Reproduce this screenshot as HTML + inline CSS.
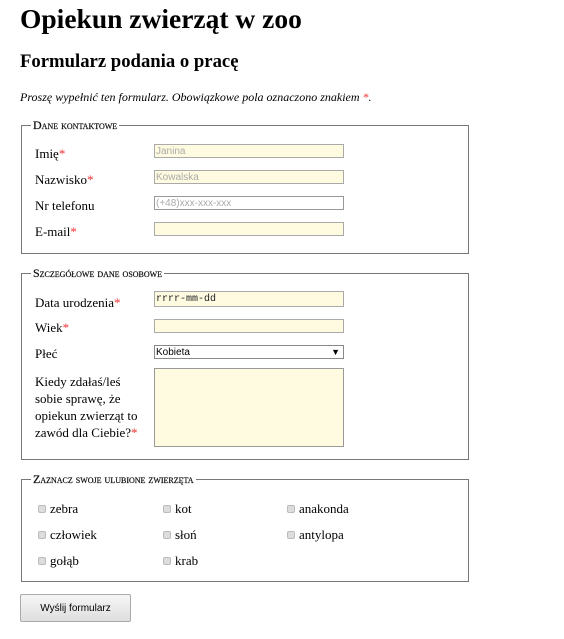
<!DOCTYPE html>
<html><head><meta charset="utf-8"><style>
body{margin:0;width:564px;height:639px;background:#fff;font-family:"Liberation Serif",serif;color:#000;position:relative;overflow:hidden}
.a{position:absolute;white-space:nowrap}
.fs{position:absolute;left:21px;width:446px;border:1px solid #777;}
.lg{position:absolute;top:-8px;left:9px;background:#fff;padding:0 2px;font-variant:small-caps;font-size:12px;line-height:14px;color:#111;-webkit-text-stroke:0.2px #000}
.lb{position:absolute;left:13px;font-size:13px}
.r{color:#e33}
.in{position:absolute;left:132px;width:187px;height:12px;border:1px solid #aaa;background:#fefbe0;font-family:"Liberation Sans",sans-serif;font-size:10px;color:#aaa;line-height:14px;padding-left:1px}
.cb{position:absolute;width:6px;height:6px;border:1px solid #bbb;border-radius:2px;background:#ddd}
.ct{position:absolute;font-size:13px}
</style></head><body>
<div class="a" style="left:20px;top:3px;font-size:27.5px;font-weight:bold">Opiekun zwierząt w zoo</div>
<div class="a" style="left:20px;top:51px;font-size:18.7px;font-weight:bold">Formularz podania o pracę</div>
<div class="a" style="left:20px;top:90px;font-size:12px;font-style:italic">Proszę wypełnić ten formularz. Obowiązkowe pola oznaczono znakiem <span class="r">*</span>.</div>

<div class="fs" style="top:125px;height:127px">
<div class="lg">Dane kontaktowe</div>
<div class="lb" style="top:20px">Imię<span class="r">*</span></div>
<div class="lb" style="top:46px">Nazwisko<span class="r">*</span></div>
<div class="lb" style="top:72px">Nr telefonu</div>
<div class="lb" style="top:98px">E-mail<span class="r">*</span></div>
<div class="in" style="top:18px">Janina</div>
<div class="in" style="top:44px">Kowalska</div>
<div class="in" style="top:70px;background:#fff;border-color:#999">(+48)xxx-xxx-xxx</div>
<div class="in" style="top:96px"></div>
</div>

<div class="fs" style="top:273px;height:185px">
<div class="lg">Szczegółowe dane osobowe</div>
<div class="lb" style="top:21px">Data urodzenia<span class="r">*</span></div>
<div class="lb" style="top:46px">Wiek<span class="r">*</span></div>
<div class="lb" style="top:72px">Płeć</div>
<div class="lb" style="top:99px;white-space:normal;width:115px;line-height:17px">Kiedy zdałaś/leś sobie sprawę, że opiekun zwierząt to zawód dla Ciebie?<span class="r">*</span></div>
<div class="in" style="top:17px;height:14px;font-family:'Liberation Mono',monospace;color:#222;line-height:16px">rrrr-mm-dd</div>
<div class="in" style="top:45px"></div>
<div class="in" style="top:71px;background:#fff;color:#000;border-color:#888;line-height:13px">Kobieta<span style="position:absolute;right:3px;top:0;font-size:9px">▼</span></div>
<div class="in" style="top:94px;height:77px;border-color:#999"></div>
</div>

<div class="fs" style="top:479px;height:101px">
<div class="lg">Zaznacz swoje ulubione zwierzęta</div>
<div class="cb" style="left:16px;top:25px"></div><div class="ct" style="left:28px;top:21px">zebra</div>
<div class="cb" style="left:141px;top:25px"></div><div class="ct" style="left:153px;top:21px">kot</div>
<div class="cb" style="left:265px;top:25px"></div><div class="ct" style="left:277px;top:21px">anakonda</div>
<div class="cb" style="left:16px;top:51px"></div><div class="ct" style="left:28px;top:47px">człowiek</div>
<div class="cb" style="left:141px;top:51px"></div><div class="ct" style="left:153px;top:47px">słoń</div>
<div class="cb" style="left:265px;top:51px"></div><div class="ct" style="left:277px;top:47px">antylopa</div>
<div class="cb" style="left:16px;top:77px"></div><div class="ct" style="left:28px;top:73px">gołąb</div>
<div class="cb" style="left:141px;top:77px"></div><div class="ct" style="left:153px;top:73px">krab</div>
</div>

<div class="a" style="left:20px;top:594px;width:109px;height:26px;border:1px solid #aaa;border-radius:2px;background:linear-gradient(#f6f6f6,#dedede);font-family:'Liberation Sans',sans-serif;font-size:10px;text-align:center;line-height:27px">Wyślij formularz</div>
</body></html>
